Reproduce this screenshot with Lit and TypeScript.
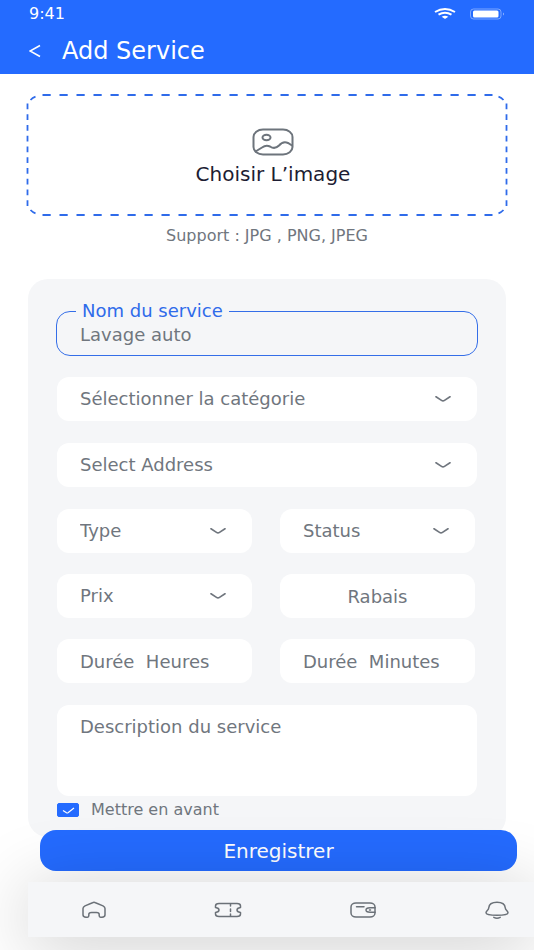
import { LitElement, html, css, svg } from "lit";
import { customElement, property, state } from "lit/decorators.js";

const chevron = svg`<path d="M1 .8 L6.500 4.400 Q8 5.400 9.500 4.400 L15 .8" fill="none" stroke="currentColor" stroke-width="1.7" stroke-linecap="round" />`;

@customElement("select-field")
class SelectField extends LitElement {
  @property() label = "";

  static styles = css`
    :host {
      display: grid;
      align-items: center;
      color: #70767e;
    }
    .control {
      grid-area: 1 / 1;
      appearance: none;
      width: 100%;
      min-width: 0;
      height: 44px;
      padding: 0 48px 0 23px;
      border: 0;
      border-radius: 12px;
      background: #fff;
      color: inherit;
      font: inherit;
    }
    .chevron {
      grid-area: 1 / 1;
      justify-self: end;
      width: 16px;
      height: 6px;
      margin-right: 26px;
      pointer-events: none;
    }
  `;

  render() {
    return html`
      <select class="control" aria-label=${this.label}>
        <option>${this.label}</option>
      </select>
      <svg class="chevron" viewBox="0 0 16 6" aria-hidden="true">${chevron}</svg>
    `;
  }
}

@customElement("drop-zone")
class DropZone extends LitElement {
  static styles = css`
    :host {
      display: block;
      margin: 21px 27px 0;
    }
    .zone {
      position: relative;
      display: flex;
      flex-direction: column;
      align-items: center;
      gap: 8px;
      width: 100%;
      min-height: 120px;
      padding: 33px 0 0 12px;
      border: 0;
      background: none;
      color: #1d1d33;
      font: inherit;
      font-size: 20px;
      line-height: 20px;
      cursor: pointer;
    }
    .outline {
      position: absolute;
      inset: 0;
      width: 100%;
      height: 100%;
      overflow: visible;
      fill: none;
      stroke: #2f6bea;
      stroke-width: 1.8;
    }
    .picture {
      width: 42px;
      height: 28px;
      fill: none;
      stroke: #6d747c;
      stroke-width: 2;
      stroke-linecap: round;
    }
  `;

  render() {
    return html`
      <button class="zone" type="button">
        <svg class="outline" viewBox="0 0 480 120" preserveAspectRatio="none" aria-hidden="true">
          <path d="M15.500 0 H465.500 M15.500 120 H465.500" stroke-dasharray="8.200 8.800" />
          <path d="M.5 8.500 V112 M479.500 8.500 V112" stroke-dasharray="5.700 5.050" />
          <path d="M3.500 5 Q5.500 2.800 8.500 1.700 M471.500 1.700 Q474.500 2.800 476.500 5 M3.500 115 Q5.500 117.200 8.500 118.300 M471.500 118.300 Q474.500 117.200 476.500 115" />
        </svg>
        <svg class="picture" viewBox="0 0 42 28" aria-hidden="true">
          <rect x="1.500" y="1.500" width="39" height="25" rx="9.500" ry="7.500" />
          <ellipse cx="14.500" cy="9.500" rx="4" ry="2.700" />
          <path d="M3.500 23.500 L10 19.500 Q14 16.500 18 18.500 C21 20.500 24 20.500 27 17.500 C30 14 32.500 13.500 36 15 L40 17.500" />
        </svg>
        <span>Choisir L’image</span>
      </button>
    `;
  }
}

@customElement("tab-bar")
class TabBar extends LitElement {
  static styles = css`
    :host {
      display: block;
      position: relative;
      margin: 11px 0 13px 28px;
      background: #f5f6f8;
      box-shadow: 0 8px 72px rgba(0, 0, 0, 0.22);
    }
    .tabs {
      display: flex;
      justify-content: space-between;
      align-items: center;
      height: 55px;
      padding: 0 23px 0 52px;
    }
    .tab {
      display: block;
      height: 20px;
      color: #6b7178;
    }
    .icon {
      width: 28px;
      height: 20px;
      fill: none;
      stroke: currentColor;
      stroke-width: 1.5;
      stroke-linecap: round;
      stroke-linejoin: round;
    }
  `;

  render() {
    const tabs = [
      {
        name: "Accueil",
        shape: svg`<path d="M12.500 2.700 Q14 2 15.500 2.700 L23 5.900 Q25 6.900 25 8.600 V14.800 Q25 17.200 22 17.200 H20.500 Q19.200 17.200 19.200 15.800 V14.600 Q19.200 12.500 16.500 12.500 H11.500 Q8.800 12.500 8.800 14.600 V15.800 Q8.800 17.200 7.500 17.200 H6 Q3 17.200 3 14.800 V8.600 Q3 6.900 5 5.900 Z" />`,
      },
      {
        name: "Bons",
        shape: svg`<path d="M5 3.500 H23 Q26.500 3.500 26.500 6 V7.500 Q23 8 23 10 Q23 12 26.500 12.500 V14 Q26.500 16.500 23 16.500 H5 Q1.500 16.500 1.500 14 V12.500 Q5 12 5 10 Q5 8 1.500 7.500 V6 Q1.500 3.500 5 3.500 Z" /><path d="M16.500 4 V6 M16.500 9 V11.500 M16.500 14 V16" />`,
      },
      {
        name: "Portefeuille",
        shape: svg`<rect x="2" y="3" width="24" height="14" rx="5" ry="4" /><path d="M7.500 6.800 H15" /><path d="M26 7.800 H21 Q17 8 17 10 Q17 12.200 21 12.200 H26 M20.500 10 H21.500" />`,
      },
      {
        name: "Notifications",
        shape: svg`<path d="M14 2.300 C9 2.300 6 4.800 5.700 8 C5.600 10 3 11 3 12.800 C3 14.700 6 15.300 14 15.300 C22 15.300 25 14.700 25 12.800 C25 11 22.400 10 22.300 8 C22 4.800 19 2.300 14 2.300 Z" /><path d="M10.800 17.400 Q14 19 17.200 17.400" />`,
      },
    ];
    return html`
      <nav class="tabs">
        ${tabs.map(
          (tab) => html`<a class="tab" href="#" aria-label=${tab.name}>
            <svg class="icon" viewBox="0 0 28 20" aria-hidden="true">${tab.shape}</svg>
          </a>`
        )}
      </nav>
    `;
  }
}

@customElement("app-root")
class AppRoot extends LitElement {
  @state() featured = true;

  static styles = css`
    :host {
      display: flow-root;
      box-sizing: border-box;
      min-height: 100vh;
      overflow: hidden;
      background: #fff;
      color: #70767e;
      font-family: "DejaVu Sans", Verdana, sans-serif;
      font-size: 18px;
      line-height: 20px;
    }
    * {
      box-sizing: border-box;
    }
    .header {
      background: #246bff;
      color: #fff;
      padding: 4px 29px 11px;
    }
    .status {
      display: flex;
      align-items: center;
      height: 20px;
      font-size: 16px;
    }
    .wifi {
      width: 22px;
      height: 12px;
      margin-left: auto;
    }
    .battery {
      width: 36px;
      height: 12px;
      margin-left: 14px;
      margin-right: -1px;
    }
    .bar {
      display: flex;
      align-items: center;
      gap: 21px;
      height: 39px;
      padding-top: 15px;
    }
    .back {
      display: flex;
      padding: 0;
      border: 0;
      background: none;
      color: inherit;
      cursor: pointer;
    }
    .back-icon {
      width: 12px;
      height: 14px;
    }
    .title {
      margin: 0;
      font-size: 24px;
      line-height: 24px;
      font-weight: 400;
    }
    .support {
      margin: 11px 0 0;
      text-align: center;
      font-size: 16px;
    }
    .card {
      display: flex;
      flex-direction: column;
      gap: 22px;
      margin: 33px 28px 0;
      padding: 24px 29px 20px;
      border-radius: 20px;
      background: #f5f6f8;
    }
    .named {
      min-width: 0;
      margin: 0 -1px -1px;
      padding: 0 0 6px;
      border: 1px solid #346ee8;
      border-radius: 14px;
      color: #2f6bea;
    }
    .legend {
      margin-left: 19px;
      padding: 0 6px;
      line-height: 16px;
    }
    .name-input {
      display: block;
      width: 100%;
      height: 30px;
      padding: 0 23px;
      border: 0;
      background: none;
      color: #70767e;
      font: inherit;
      outline: none;
    }
    .pairs {
      display: grid;
      grid-template-columns: 1fr 1fr;
      gap: 21px 28px;
      padding-right: 2px;
    }
    .box {
      display: block;
      width: 100%;
      min-width: 0;
      height: 44px;
      padding: 0 8px 0 23px;
      border: 0;
      border-radius: 12px;
      background: #fff;
      color: inherit;
      font: inherit;
    }
    .box::placeholder {
      color: inherit;
      opacity: 1;
    }
    .centered {
      padding: 0 8px;
      text-align: center;
    }
    .area {
      height: 91px;
      padding-top: 12px;
      resize: none;
    }
    .featured {
      display: flex;
      align-items: center;
      gap: 12px;
      height: 14px;
      margin-top: -15px;
      font-size: 16px;
    }
    .tick {
      display: grid;
    }
    .tick-input {
      grid-area: 1 / 1;
      appearance: none;
      width: 22px;
      height: 14px;
      margin: 0;
      border: 1px solid #246bff;
      border-radius: 2px;
    }
    .tick-input:checked {
      background: #246bff;
    }
    .tick-mark {
      grid-area: 1 / 1;
      width: 22px;
      height: 14px;
      pointer-events: none;
    }
    .submit-row {
      position: relative;
      padding: 0 17px 0 40px;
      margin-top: -7px;
    }
    .submit {
      display: block;
      width: 100%;
      height: 41px;
      padding: 0;
      border: 0;
      border-radius: 16px;
      background: #246bff;
      color: #fff;
      font: inherit;
      font-size: 20px;
      cursor: pointer;
    }
  `;

  private toggle(event: Event) {
    this.featured = (event.target as HTMLInputElement).checked;
  }

  render() {
    return html`
      <header class="header">
        <div class="status">
          <span>9:41</span>
          <svg class="wifi" viewBox="0 0 22 12" aria-hidden="true">
            <g fill="none" stroke="#fff" stroke-width="2">
              <path d="M1 4 Q11 -1.800 21 4" />
              <path d="M4.500 6.600 Q11 2.700 17.500 6.600" />
            </g>
            <path d="M7.700 8.700 Q11 6.600 14.300 8.700 L11.700 10.600 Q11 11.100 10.300 10.600 Z" fill="#fff" />
          </svg>
          <svg class="battery" viewBox="0 0 36 12" aria-hidden="true">
            <rect x=".5" y="1" width="30.500" height="10" rx="3" fill="none" stroke="#fff" stroke-opacity=".4" />
            <rect x="3" y="2.500" width="25.500" height="7" rx="1.500" fill="#fff" />
            <path d="M33 4.500 Q35 6 33 7.500 Z" fill="#fff" fill-opacity=".5" />
          </svg>
        </div>
        <div class="bar">
          <button class="back" type="button" aria-label="Retour">
            <svg class="back-icon" viewBox="0 0 12 14" aria-hidden="true">
              <path d="M11 1.500 L1 7 L11 12.500" fill="none" stroke="#fff" stroke-width="1.600" />
            </svg>
          </button>
          <h1 class="title">Add Service</h1>
        </div>
      </header>

      <drop-zone></drop-zone>
      <p class="support">Support : JPG , PNG, JPEG</p>

      <form @submit=${(e: Event) => e.preventDefault()}>
        <div class="card">
          <fieldset class="named">
            <legend class="legend"><label for="name">Nom du service</label></legend>
            <input class="name-input" id="name" type="text" .value=${"Lavage auto"} />
          </fieldset>
          <select-field label="Sélectionner la catégorie"></select-field>
          <select-field label="Select Address"></select-field>
          <div class="pairs">
            <select-field label="Type"></select-field>
            <select-field label="Status"></select-field>
            <select-field label="Prix"></select-field>
            <input class="box centered" type="text" placeholder="Rabais" aria-label="Rabais" />
            <input class="box" type="text" placeholder="Durée  Heures" aria-label="Durée Heures" />
            <input class="box" type="text" placeholder="Durée  Minutes" aria-label="Durée Minutes" />
          </div>
          <textarea class="box area" placeholder="Description du service" aria-label="Description du service"></textarea>
          <label class="featured">
            <span class="tick">
              <input class="tick-input" type="checkbox" .checked=${this.featured} @change=${this.toggle} />
              <svg class="tick-mark" viewBox="0 0 22 14" aria-hidden="true">
                <path d="M6 7.500 L9.500 9.800 Q10.200 10.200 11 9.800 L17 5" fill="none" stroke="#fff" stroke-width="1.200" />
              </svg>
            </span>
            <span>Mettre en avant</span>
          </label>
        </div>
        <div class="submit-row">
          <button class="submit" type="submit">Enregistrer</button>
        </div>
      </form>
      <tab-bar></tab-bar>
    `;
  }
}
